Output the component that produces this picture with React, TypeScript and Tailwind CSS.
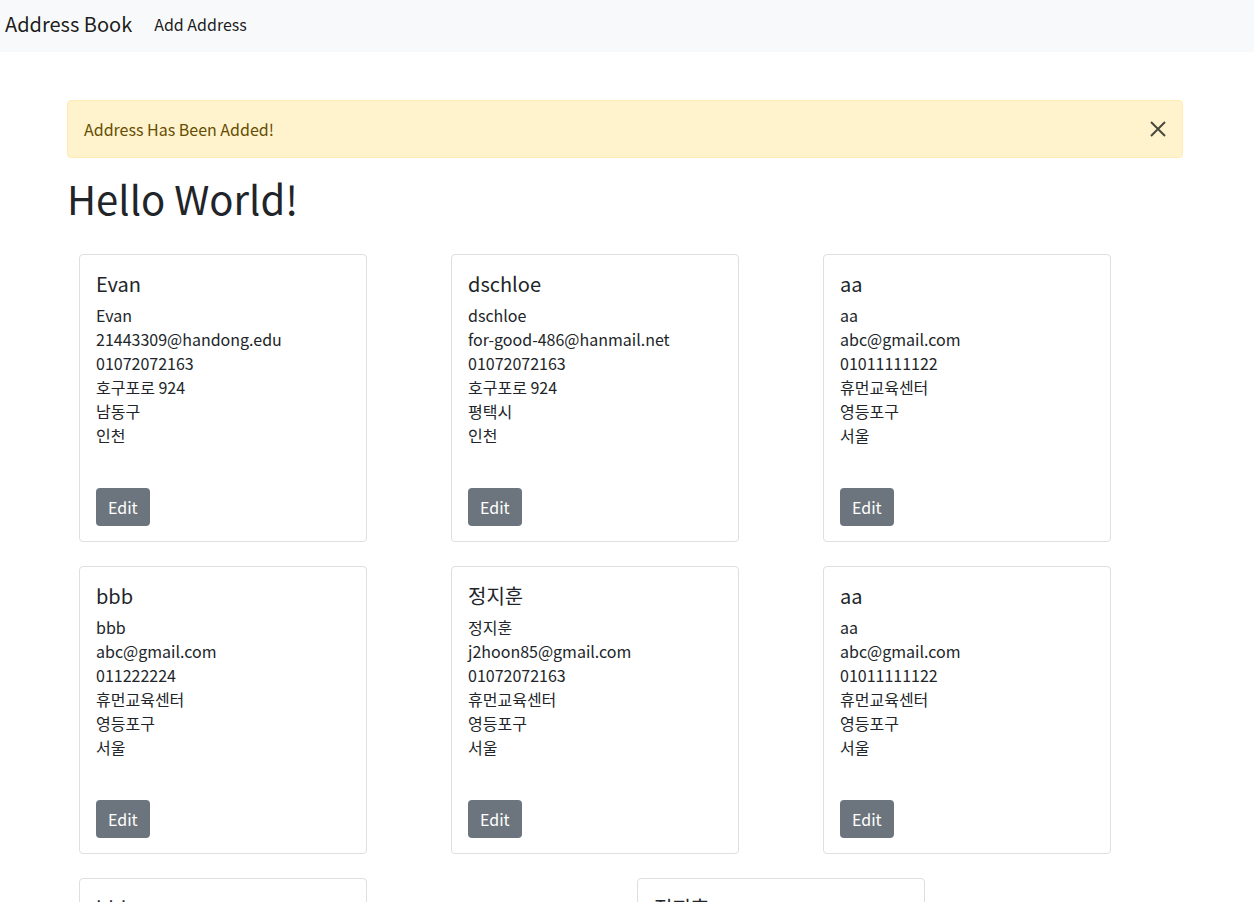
import React from "react";

type Address = {
  name: string;
  email: string;
  phone: string;
  street: string;
  district: string;
  city: string;
};

const rows: Address[][] = [
  [
    { name: "Evan", email: "21443309@handong.edu", phone: "01072072163", street: "호구포로 924", district: "남동구", city: "인천" },
    { name: "dschloe", email: "for-good-486@hanmail.net", phone: "01072072163", street: "호구포로 924", district: "평택시", city: "인천" },
    { name: "aa", email: "abc@gmail.com", phone: "01011111122", street: "휴먼교육센터", district: "영등포구", city: "서울" },
  ],
  [
    { name: "bbb", email: "abc@gmail.com", phone: "011222224", street: "휴먼교육센터", district: "영등포구", city: "서울" },
    { name: "정지훈", email: "j2hoon85@gmail.com", phone: "01072072163", street: "휴먼교육센터", district: "영등포구", city: "서울" },
    { name: "aa", email: "abc@gmail.com", phone: "01011111122", street: "휴먼교육센터", district: "영등포구", city: "서울" },
  ],
];

const lastRow: Address[] = [
  { name: "bbb", email: "abc@gmail.com", phone: "011222224", street: "휴먼교육센터", district: "영등포구", city: "서울" },
  { name: "정지훈", email: "j2hoon85@gmail.com", phone: "01072072163", street: "휴먼교육센터", district: "영등포구", city: "서울" },
];

const AddressCard = ({ item }: { item: Address }) => {
  return (
    <div className="ml-3 mt-6 w-[288px] h-[288px] border border-[#dfdfdf] rounded-[4px] p-4 bg-white">
      <h5 className="text-[20px] leading-[24px] mb-2 mt-[1px] text-[#212529]">{item.name}</h5>
      <div className="text-[16px] leading-[24px] text-[#212529] -mt-[1px]">
        <div>{item.name}</div>
        <div>{item.email}</div>
        <div>{item.phone}</div>
        <div>{item.street}</div>
        <div>{item.district}</div>
        <div>{item.city}</div>
      </div>
      <button className="mt-[41px] h-[38px] px-3 rounded-[4px] bg-[#6c757d] text-white text-[16px]">
        Edit
      </button>
    </div>
  );
};

export default function App() {
  return (
    <div className="bg-white text-[#212529] font-['Noto_Sans_CJK_KR',sans-serif] overflow-hidden h-[902px]">
      <nav className="h-[52px] bg-[#f8f9fa] flex items-center pb-[5px]">
        <span className="ml-[5px] text-[20px] text-[rgba(0,0,0,0.9)]">Address Book</span>
        <span className="ml-[22px] text-[16px] text-[rgba(0,0,0,0.9)]">Add Address</span>
      </nav>
      <div className="ml-[67px] w-[1116px] pt-12">
        <div className="flex items-center justify-between h-[58px] border border-[#ffecb5] bg-[#fff3cd] rounded-[4px] px-4 text-[#664d03] text-[16px]">
          <span>Address Has Been Added!</span>
          <svg width="16" height="16" viewBox="0 0 16 16" className="opacity-70">
            <path d="M1 1 L15 15 M15 1 L1 15" stroke="#000" strokeWidth="2" />
          </svg>
        </div>
        <h1 className="mt-4 mb-2 text-[40px] leading-[48px] font-normal">Hello World!</h1>
        {rows.map((row, i) => (
          <div key={i} className="grid grid-cols-3">
            {row.map((item, j) => (
              <AddressCard key={j} item={item} />
            ))}
          </div>
        ))}
        <div className="grid grid-cols-2">
          {lastRow.map((item, j) => (
            <AddressCard key={j} item={item} />
          ))}
        </div>
      </div>
    </div>
  );
}
